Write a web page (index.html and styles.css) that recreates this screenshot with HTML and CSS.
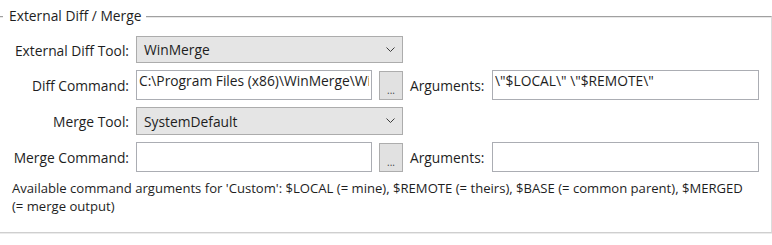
FILE: index.html
```html
<!DOCTYPE html>
<html lang="en">
<head>
<meta charset="utf-8">
<title>External Diff / Merge</title>
<link rel="stylesheet" href="styles.css">
</head>
<body>
<section class="groupbox">
  <div class="gb-head">
    <span class="gb-line gb-line-short"></span>
    <span class="gb-title">External Diff / Merge</span>
    <span class="gb-line gb-line-long"></span>
  </div>
  <div class="gb-body">
    <div class="form-grid">
      <label class="lbl">External Diff Tool:</label>
      <div class="combo span-2">
        <span class="combo-text">WinMerge</span>
        <svg class="chev" width="9" height="5" viewBox="0 0 9 5"><path d="M0.5 0.5 L4.5 4.5 L8.5 0.5" fill="none" stroke="#3c3c3c" stroke-width="1"/></svg>
      </div>
      <div class="empty span-2"></div>

      <label class="lbl">Diff Command:</label>
      <input class="textbox" type="text" value="C:\Program Files (x86)\WinMerge\WinMergeU.exe" readonly>
      <button class="browse" type="button">...</button>
      <label class="lbl lbl-left">Arguments:</label>
      <input class="textbox" type="text" value="\&quot;$LOCAL\&quot; \&quot;$REMOTE\&quot;" readonly>

      <label class="lbl">Merge Tool:</label>
      <div class="combo span-2">
        <span class="combo-text">SystemDefault</span>
        <svg class="chev" width="9" height="5" viewBox="0 0 9 5"><path d="M0.5 0.5 L4.5 4.5 L8.5 0.5" fill="none" stroke="#3c3c3c" stroke-width="1"/></svg>
      </div>
      <div class="empty span-2"></div>

      <label class="lbl">Merge Command:</label>
      <input class="textbox" type="text" value="" readonly>
      <button class="browse" type="button">...</button>
      <label class="lbl lbl-left">Arguments:</label>
      <input class="textbox" type="text" value="" readonly>
    </div>
    <p class="hint">Available command arguments for 'Custom': $LOCAL (= mine), $REMOTE (= theirs), $BASE (= common parent), $MERGED<br>(= merge output)</p>
  </div>
</section>
</body>
</html>
```

FILE: styles.css
```css
html, body {
  margin: 0;
  padding: 0;
  background: #ffffff;
}

body {
  width: 772px;
  height: 245px;
  overflow: hidden;
  font-family: "Open Sans", "Noto Sans", "Liberation Sans", sans-serif;
  font-size: 13.8px;
  line-height: 18px;
  color: #1e1e1e;
}

.groupbox {
  width: 772px;
  margin-top: 7px;
}

.gb-head {
  display: flex;
  height: 18px;
}

.gb-line {
  margin-top: 9px;
  border-top: 1px solid #a0a0a0;
  box-shadow: inset 0 1px 0 0 #e8e8e8;
}

.gb-line-short {
  width: 3px;
}

.gb-line-long {
  flex: 1;
  border-right: 1px solid #dcdcdc;
}

.gb-title {
  padding: 0 5px 0 6px;
  line-height: 18px;
  white-space: nowrap;
}

.gb-body {
  border-right: 1px solid #dcdcdc;
  border-bottom: 1px solid #cfcfcf;
  box-shadow: 0 1px 0 0 #ebebeb;
  padding: 11px 12px 17px 12px;
}

.form-grid {
  display: grid;
  grid-template-columns: 117px 236px 24px 75px 1fr;
  grid-template-rows: 27px 30px 28px 30px;
  column-gap: 7px;
  row-gap: 7px;
}

.span-2 {
  grid-column: span 2;
}

.lbl {
  display: flex;
  align-items: center;
  justify-content: flex-end;
  white-space: nowrap;
  padding-top: 2px;
}

.lbl-left {
  justify-content: flex-start;
}

.combo {
  display: flex;
  align-items: center;
  justify-content: space-between;
  box-sizing: border-box;
  border: 1px solid #acacac;
  background: #e5e5e5;
  padding: 0 7px 0 7px;
}

.combo-text {
  padding-top: 1px;
}

.chev {
  display: block;
  margin-top: -1px;
}

.textbox {
  box-sizing: border-box;
  width: 100%;
  height: 100%;
  margin: 0;
  border: 1px solid #abadb3;
  background: #ffffff;
  padding: 0 2px 9px 2px;
  font: inherit;
  line-height: 18px;
  color: #1e1e1e;
  outline: none;
}

.browse {
  align-self: center;
  box-sizing: border-box;
  height: 29px;
  margin: 0;
  padding: 10px 0 0 0;
  border: 1px solid #adadad;
  background: #e1e1e1;
  font-family: inherit;
  font-size: 10px;
  color: #444444;
  line-height: 12px;
}

.hint {
  margin: 7px 0 0 0;
  font-size: 13.1px;
  line-height: 18px;
}
```
